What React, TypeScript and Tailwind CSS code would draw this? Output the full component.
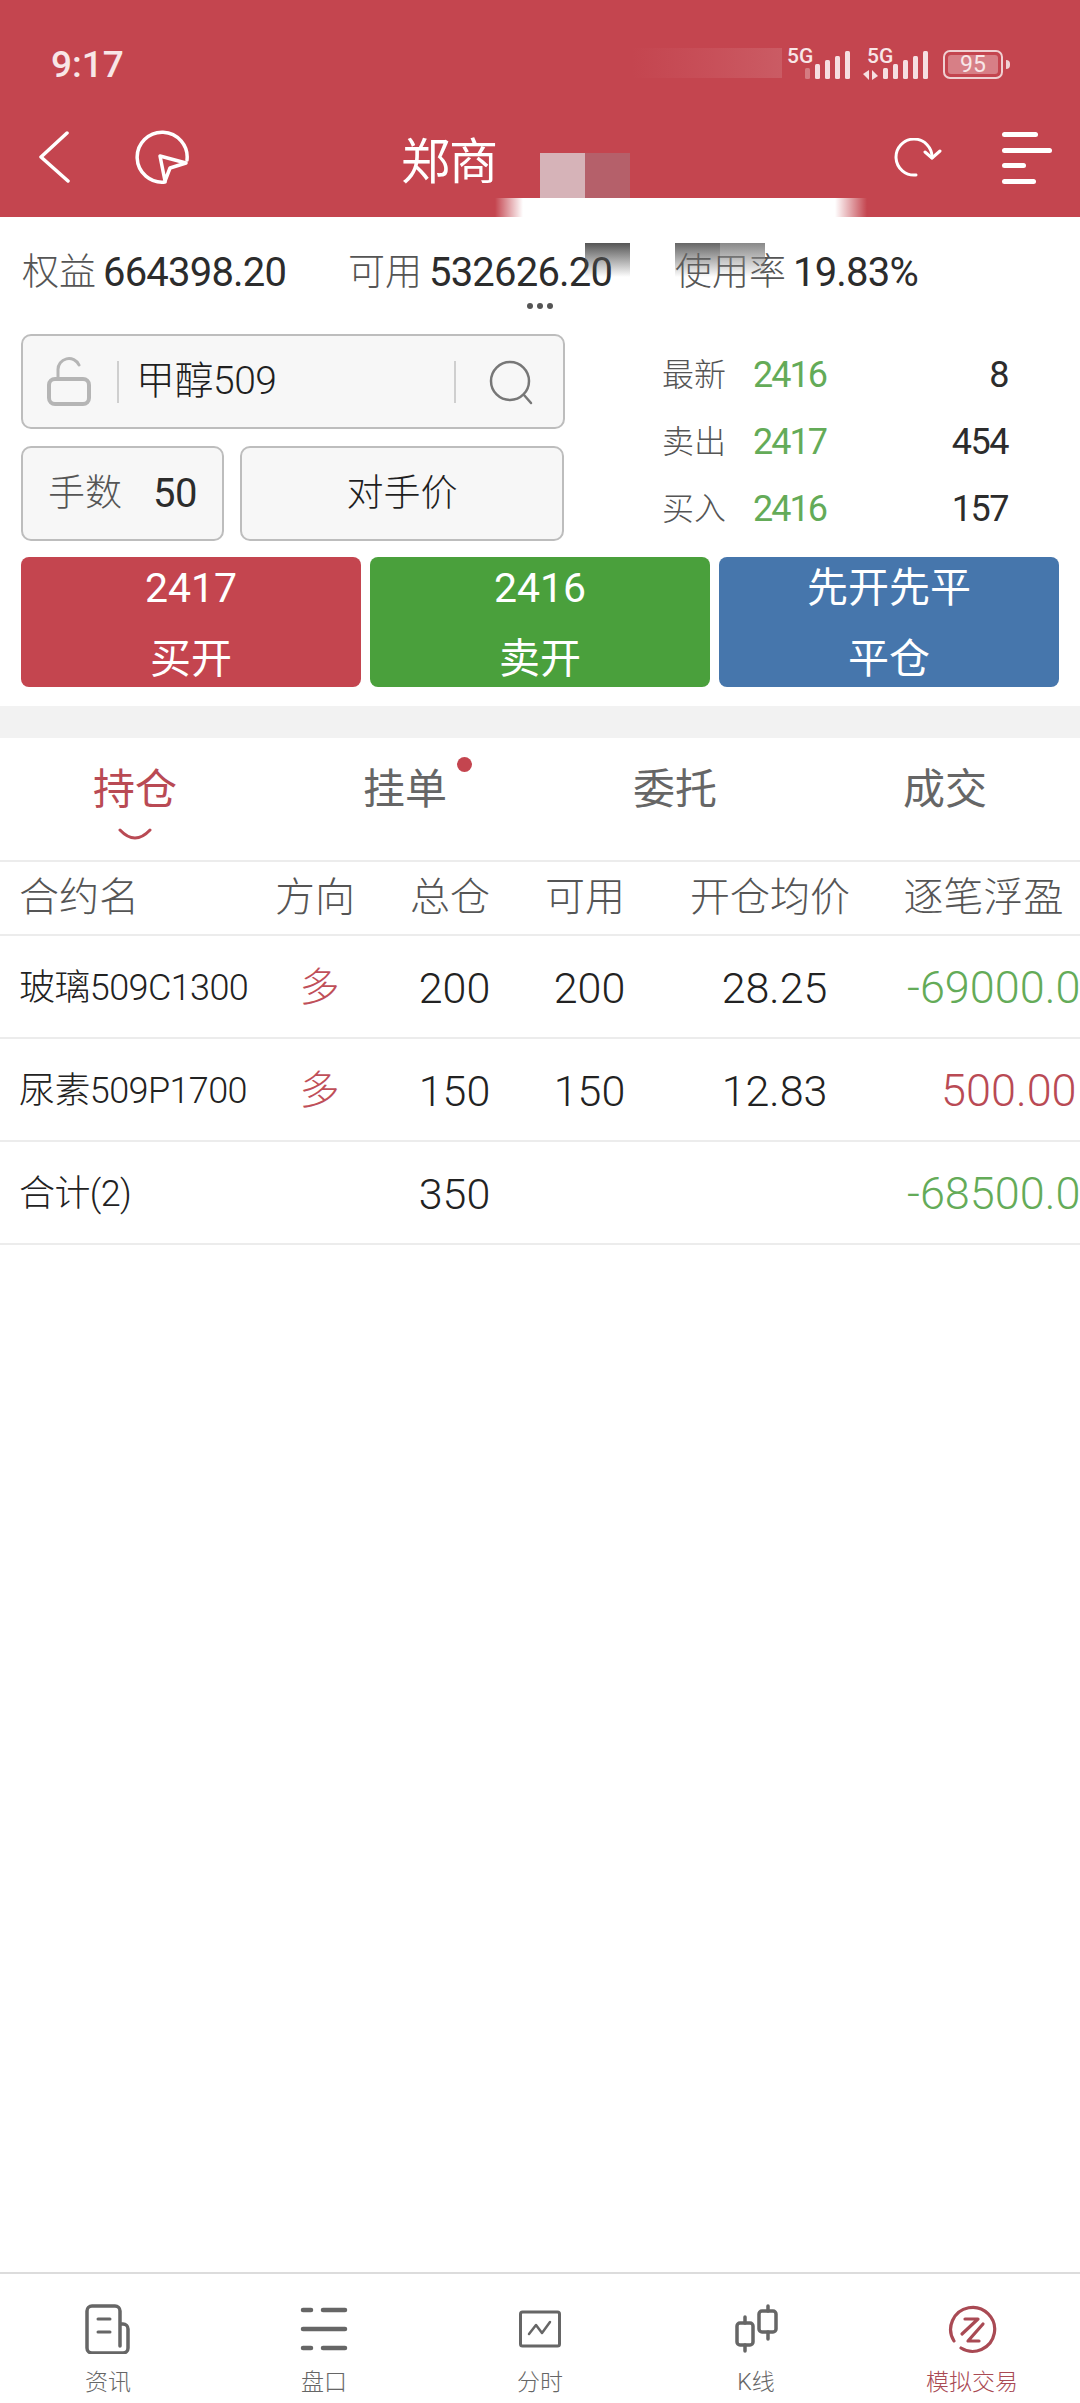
const font = { fontFamily: '"Roboto", "Noto Sans CJK SC", sans-serif' };

function Bars({ firstFaint }: { firstFaint?: boolean }) {
  return (
    <svg width="45" height="28" viewBox="0 0 45 28" fill="#f6dfe1">
      <rect x="0" y="17" width="5" height="11" rx="1.5" opacity={firstFaint ? 0.35 : 1} />
      <rect x="10" y="13" width="5" height="15" rx="1.5" />
      <rect x="20" y="9" width="5" height="19" rx="1.5" />
      <rect x="30" y="5" width="5" height="23" rx="1.5" />
      <rect x="40" y="0" width="5" height="28" rx="1.5" />
    </svg>
  );
}

function StatusBar() {
  return (
    <div className="flex h-[104px] items-start pl-[51px] pt-[42px] text-[#f8e6e7]">
      <span className="mt-[1px] text-[37px] font-medium leading-[44px]">9:17</span>
      <div className="ml-auto mr-[70px] flex items-start">
        <div className="mt-[6px] mr-[5px] h-[30px] w-[150px] bg-gradient-to-r from-transparent via-[#d0666f] to-[#d98f95] opacity-30" />
        <span className="mt-[2px] w-[26px] text-[21px] font-medium leading-[24px]">5G</span>
        <div className="mt-[9px] -ml-[8px]">
          <Bars firstFaint />
        </div>
        <div className="ml-[13px] w-[20px]">
          <span className="ml-[4px] mt-[2px] block whitespace-nowrap text-[21px] font-medium leading-[24px]">5G</span>
          <svg className="mt-[2px]" width="15" height="10" viewBox="0 0 15 10" fill="#f6dfe1">
            <polygon points="0,4 6,0 6,10" />
            <polygon points="15,6 9,0 9,10" />
          </svg>
        </div>
        <div className="mt-[9px]">
          <Bars />
        </div>
        <div className="ml-[15px] mt-[8px] flex items-center">
          <div className="flex h-[29px] w-[60px] items-center rounded-[7px] border-[2.5px] border-[#f0d0d2] p-[3px]">
            <div className="flex h-full w-full items-center justify-center rounded-[3px] bg-[#d77f86] text-[23px] leading-none">95</div>
          </div>
          <div className="ml-[3px] h-[9px] w-[4px] rounded-r bg-[#f0d0d2]" />
        </div>
      </div>
    </div>
  );
}

function NavBar() {
  return (
    <div className="flex h-[113px] items-start pt-[25px] text-white">
      <svg className="ml-[38px]" width="34" height="54" viewBox="0 0 34 54" fill="none" stroke="#fff" strokeWidth="3.5" strokeLinecap="round" strokeLinejoin="round">
        <polyline points="29,4 3,28 30,52" />
      </svg>
      <svg className="ml-[63px]" width="56" height="56" viewBox="0 0 56 56" fill="none" stroke="#fff" strokeWidth="3.5" strokeLinecap="round" strokeLinejoin="round">
        <path d="M30 53 A25 25 0 1 1 52 31" />
        <path d="M25 27 L51 34 L35 39 L30 52 Z" />
      </svg>
      <span className="ml-[210px] mt-[4px] text-[49px] leading-[60px] tracking-[-1px]">郑商</span>
      <svg className="ml-auto mt-[9px]" width="48" height="42" viewBox="0 0 48 42" fill="none" stroke="#fff" strokeWidth="3" strokeLinecap="round" strokeLinejoin="round">
        <path d="M22 37 A18 18 0 1 1 38 20" />
        <polyline points="31,14 38,20 46,13" />
      </svg>
      <div className="ml-[60px] mr-[28px] mt-[3px] flex h-[52px] w-[50px] flex-col justify-between">
        <div className="h-[5px] w-[36px] rounded-full bg-white" />
        <div className="h-[5px] w-[50px] rounded-full bg-white" />
        <div className="h-[5px] w-[24px] rounded-full bg-white" />
        <div className="h-[5px] w-[34px] rounded-full bg-white" />
      </div>
    </div>
  );
}

function Stat({ label, value }: { label: string; value: string }) {
  return (
    <div className="flex items-center whitespace-nowrap">
      <span className="text-[37px] font-light text-[#555]">{label}</span>
      <span className="ml-[7px] text-[40px] tracking-[-0.8px] text-[#2c2c2c]">{value}</span>
    </div>
  );
}

function Quote({ label, price, vol }: { label: string; price: string; vol: string }) {
  return (
    <div className="flex h-[67px] items-center">
      <span className="w-[91px] text-[32px] font-light text-[#555]">{label}</span>
      <span className="text-[36px] tracking-[-2px] text-[#64ab58]">{price}</span>
      <span className="ml-auto text-[36px] tracking-[-1.5px] text-[#2c2c2c]">{vol}</span>
    </div>
  );
}

function TradeBtn({ top, bottom, color }: { top: string; bottom: string; color: string }) {
  return (
    <div className={`flex h-[130px] flex-col items-center justify-between rounded-[8px] pt-[3px] text-[41px] text-white ${color}`}>
      <span className="leading-[56px]">{top}</span>
      <span className="leading-[56px]">{bottom}</span>
    </div>
  );
}

const gridCols = 'grid grid-cols-[247px_136px_134px_136px_234px_193px] items-center border-b-2 border-[#ececec]';

function PositionRow({ name, dir, total, avail, avg, pnl, pnlClass }: { name: string; dir?: string; total: string; avail?: string; avg?: string; pnl: string; pnlClass: string }) {
  return (
    <div className={`${gridCols} h-[103px] pt-[3px]`}>
      <span className="whitespace-nowrap pl-[19px] text-[36px] font-light tracking-[-0.6px] text-[#222]">{name}</span>
      <span className="pl-[9px] text-center text-[40px] font-light text-[#bf4f59]">{dir}</span>
      <span className="pl-[9px] text-center text-[43px] font-light text-[#222]">{total}</span>
      <span className="pl-[9px] text-center text-[43px] font-light text-[#222]">{avail}</span>
      <span className="pl-[9px] text-center text-[43px] font-light text-[#222]">{avg}</span>
      <span className={`whitespace-nowrap text-[45px] font-light ${pnlClass}`}>{pnl}</span>
    </div>
  );
}

function NavItem({ label, active, children }: { label: string; active?: boolean; children: React.ReactNode }) {
  return (
    <div className="flex flex-col items-center">
      <div className="flex h-[52px] items-center justify-center">{children}</div>
      <span className={`mt-[12px] text-[23px] font-light leading-[32px] ${active ? 'text-[#a94a54]' : 'text-[#666]'}`}>{label}</span>
    </div>
  );
}

export default function App() {
  return (
    <div style={font} className="relative flex h-[2403px] w-[1080px] flex-col overflow-hidden bg-white">
      <div className="h-[217px] bg-[#c4454f]">
        <StatusBar />
        <NavBar />
      </div>

      {/* 打码区域 */}
      <div className="absolute left-[495px] top-[198px] h-[20px] w-[372px] bg-[linear-gradient(90deg,transparent,#fff_28px,#fff_340px,transparent)]" />
      <div className="absolute left-[540px] top-[153px] h-[45px] w-[45px] bg-[#d6b3b8]" />
      <div className="absolute left-[585px] top-[153px] h-[45px] w-[45px] bg-[#b5606a]" />
      <div className="absolute left-[585px] top-[243px] h-[34px] w-[45px] bg-gradient-to-b from-[#555] to-transparent" />
      <div className="absolute left-[675px] top-[243px] h-[34px] w-[45px] bg-gradient-to-b from-[#666] to-transparent" />
      <div className="absolute left-[720px] top-[243px] h-[34px] w-[45px] bg-gradient-to-b from-[#888] to-transparent" />

      <div className="grid h-[86px] grid-cols-[326px_327px_1fr] items-end pl-[22px]">
        <Stat label="权益" value="664398.20" />
        <Stat label="可用" value="532626.20" />
        <Stat label="使用率" value="19.83%" />
      </div>
      <div className="flex h-[6px] justify-center gap-[4px]">
        <div className="h-[6px] w-[6px] rounded-full bg-[#555]" />
        <div className="h-[6px] w-[6px] rounded-full bg-[#555]" />
        <div className="h-[6px] w-[6px] rounded-full bg-[#555]" />
      </div>

      <div className="mt-[25px] flex px-[21px]">
        <div className="w-[544px]">
          <div className="flex h-[95px] items-center rounded-[10px] border-2 border-[#bdbdbd] bg-[#f7f7f7]">
            <svg className="ml-[23px]" width="46" height="50" viewBox="0 0 46 50" fill="none" stroke="#b5b5b5" strokeLinecap="round">
              <path d="M12 22 V13 A11 11 0 0 1 33 8" strokeWidth="3" />
              <rect x="3" y="22" width="40" height="25" rx="6" strokeWidth="4" />
            </svg>
            <div className="ml-[25px] h-[42px] w-[2px] bg-[#cfcfcf]" />
            <span className="ml-[17px] text-[39px] font-light tracking-[-0.5px] text-[#1f1f1f]">甲醇509</span>
            <div className="ml-auto h-[42px] w-[2px] bg-[#cfcfcf]" />
            <svg className="ml-[32px] mr-[29px]" width="46" height="46" viewBox="0 0 46 46" fill="none" stroke="#777" strokeWidth="2.5" strokeLinecap="round">
              <circle cx="22" cy="22" r="19" />
              <line x1="36" y1="36" x2="43" y2="44" />
            </svg>
          </div>
          <div className="mt-[17px] flex gap-[16px]">
            <div className="flex h-[95px] w-[203px] items-center rounded-[10px] border-2 border-[#bdbdbd] bg-[#f7f7f7] pl-[25px]">
              <span className="text-[37px] font-light text-[#555]">手数</span>
              <span className="ml-[31px] text-[40px] tracking-[-0.5px] text-[#2c2c2c]">50</span>
            </div>
            <div className="flex h-[95px] w-[324px] items-center justify-center rounded-[10px] border-2 border-[#bdbdbd] bg-[#f7f7f7] text-[37px] font-light text-[#1f1f1f]">对手价</div>
          </div>
        </div>
        <div className="ml-[97px] mt-[7px] w-[346px]">
          <Quote label="最新" price="2416" vol="8" />
          <Quote label="卖出" price="2417" vol="454" />
          <Quote label="买入" price="2416" vol="157" />
        </div>
      </div>

      <div className="mt-[15px] grid grid-cols-3 gap-[9px] px-[21px]">
        <TradeBtn top="2417" bottom="买开" color="bg-[#c4454f]" />
        <TradeBtn top="2416" bottom="卖开" color="bg-[#4aa03c]" />
        <TradeBtn top="先开先平" bottom="平仓" color="bg-[#4676ac]" />
      </div>

      <div className="mt-[19px] h-[32px] bg-[#f2f2f2]" />

      <div className="grid h-[124px] grid-cols-4 border-b-2 border-[#ececec] text-[42px] text-[#666]">
        <div className="relative pt-[20px] text-center text-[#b94a54]">
          持仓
          <svg className="absolute left-[118px] top-[90px]" width="34" height="14" viewBox="0 0 34 14" fill="none" stroke="#b94a54" strokeWidth="3" strokeLinecap="round">
            <path d="M2 2 Q17 18 32 2" />
          </svg>
        </div>
        <div className="relative pt-[20px] text-center">
          挂单
          <div className="absolute left-[187px] top-[19px] h-[15px] w-[15px] rounded-full bg-[#c4454f]" />
        </div>
        <div className="pt-[20px] text-center">委托</div>
        <div className="pt-[20px] text-center">成交</div>
      </div>

      <div className={`${gridCols} h-[74px] text-[40px] font-light text-[#555]`}>
        <span className="pl-[19px]">合约名</span>
        <span className="text-center">方向</span>
        <span className="text-center">总仓</span>
        <span className="text-center">可用</span>
        <span className="text-center">开仓均价</span>
        <span className="text-center">逐笔浮盈</span>
      </div>
      <PositionRow name="玻璃509C1300" dir="多" total="200" avail="200" avg="28.25" pnl="-69000.00" pnlClass="pl-[20px] text-[#64ab58]" />
      <PositionRow name="尿素509P1700" dir="多" total="150" avail="150" avg="12.83" pnl="500.00" pnlClass="pl-[54px] text-[#b94a54]" />
      <PositionRow name="合计(2)" total="350" pnl="-68500.00" pnlClass="pl-[20px] text-[#64ab58]" />

      <div className="mt-auto grid h-[131px] grid-cols-5 border-t-2 border-[#dcdcdc] pt-[29px]">
        <NavItem label="资讯">
          <svg width="46" height="50" viewBox="0 0 46 50" fill="none" stroke="#666" strokeWidth="3.5" strokeLinecap="round" strokeLinejoin="round">
            <path d="M35 42 V7 A5 5 0 0 0 30 2 H7 A5 5 0 0 0 2 7 V44 A5 5 0 0 0 7 49 H38 A5 5 0 0 0 43 44 V25 A5 5 0 0 0 38 20 H36" />
            <line x1="13" y1="15" x2="25" y2="15" strokeWidth="3" />
            <line x1="13" y1="28" x2="25" y2="28" strokeWidth="3" />
          </svg>
        </NavItem>
        <NavItem label="盘口">
          <svg width="48" height="46" viewBox="0 0 48 46" fill="none" stroke="#666" strokeWidth="4.5" strokeLinecap="round">
            <line x1="3" y1="4" x2="11" y2="4" />
            <line x1="23" y1="4" x2="45" y2="4" />
            <line x1="3" y1="23" x2="45" y2="23" />
            <line x1="3" y1="42" x2="11" y2="42" />
            <line x1="23" y1="42" x2="45" y2="42" />
          </svg>
        </NavItem>
        <NavItem label="分时">
          <svg width="42" height="38" viewBox="0 0 42 38" fill="none" stroke="#666" strokeLinejoin="round" strokeLinecap="round">
            <rect x="1.5" y="2" width="39" height="34" rx="2" strokeWidth="3" />
            <polyline points="10,24 17,15 23,23 31,12" strokeWidth="2.5" />
          </svg>
        </NavItem>
        <NavItem label="K线">
          <svg width="44" height="50" viewBox="0 0 44 50" fill="none" stroke="#666" strokeWidth="3.5" strokeLinecap="round" strokeLinejoin="round">
            <rect x="3" y="19" width="16" height="22" rx="3" />
            <line x1="11" y1="13" x2="11" y2="19" />
            <line x1="11" y1="41" x2="11" y2="47" />
            <rect x="25" y="7" width="17" height="21" rx="3" />
            <line x1="34" y1="2" x2="34" y2="7" />
            <line x1="34" y1="28" x2="34" y2="35" />
          </svg>
        </NavItem>
        <NavItem label="模拟交易" active>
          <svg width="50" height="50" viewBox="0 0 50 50" fill="none" stroke="#a94a54" strokeWidth="3.2" strokeLinecap="round" strokeLinejoin="round">
            <path d="M7 37 A22 22 0 1 1 14 44" />
            <polyline points="18,15 31,15 15,30" />
            <polyline points="36,20 21,37 32,37" />
          </svg>
        </NavItem>
      </div>
    </div>
  );
}
